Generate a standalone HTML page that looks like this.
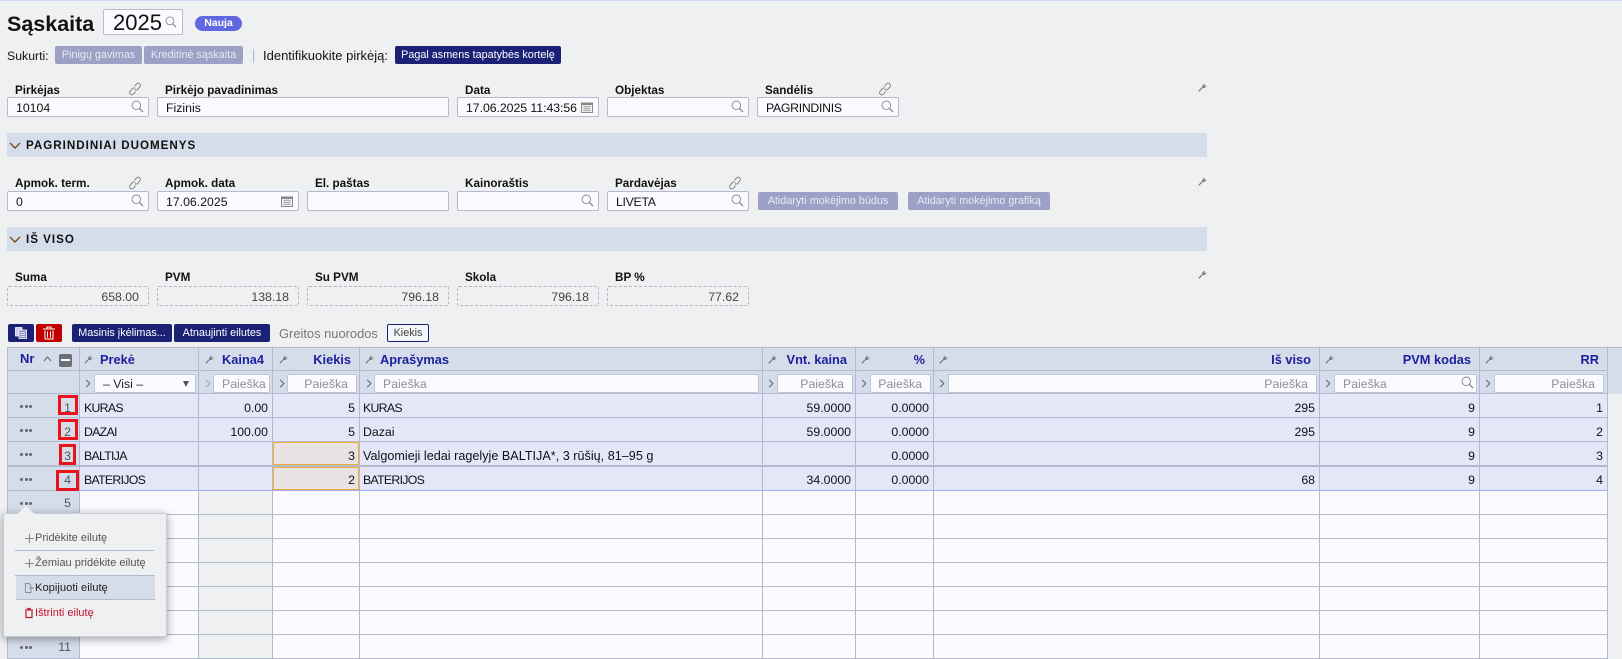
<!DOCTYPE html>
<html lang="lt"><head><meta charset="utf-8"><title>Sąskaita</title>
<style>
*{box-sizing:border-box}
html,body{margin:0;padding:0}
body{width:1622px;height:651px;overflow:hidden;position:relative;background:#eff0f2;font-family:"Liberation Sans",sans-serif;font-size:12.3px;color:#111}
.a{position:absolute}
.t{position:absolute;white-space:nowrap;line-height:14px}
.l{position:absolute;white-space:nowrap;font-weight:bold;font-size:11.7px;line-height:14px;color:#111}
.i{position:absolute;height:20px;background:#fbfbff;border:1px solid #b4bacd;border-radius:2px;line-height:20px;padding-left:8px;font-size:12.3px;white-space:nowrap}
.v{position:absolute;height:20px;border:1px dashed #b4b8c0;border-radius:2px;line-height:20px;text-align:right;padding-right:9px;font-size:12.3px;color:#444;width:142px;top:286px}
.b{position:absolute;height:18px;line-height:19px;text-align:center;font-size:10.8px;border-radius:2px;color:#fff;white-space:nowrap}
.g{background:#9da1c5;color:#e9eaf4}
.d{background:#1b2276}
.band{position:absolute;left:7px;width:1200px;height:24px;background:#d5dcea;font-weight:bold;font-size:11.6px;letter-spacing:1px;line-height:25px;padding-left:19px;color:#111}
svg{position:absolute;overflow:visible;fill:none}
table{position:absolute;left:7px;top:347px;width:1600px;border-collapse:separate;border-spacing:0;table-layout:fixed;border-left:1px solid #b4bacd;border-top:1px solid #b4bacd}
td{border-right:1px solid #b4bacd;border-bottom:1px solid #b4bacd;padding:0 4px 0 3px;white-space:nowrap;overflow:hidden;font-size:12.3px;background:#fbfbff}
td:nth-child(2){padding-left:4px}
td.r{text-align:right}
td.n{background:#d5dcea;text-align:right;color:#555;padding-right:8px;position:relative}
tr.h td{background:#d5dcea;font-weight:bold;font-size:12.8px;color:#1c1fa0;text-align:right;padding:0 8px 0 4px}
tr.f td{background:#d5dcea}
tr.x td{background:#e3e7f8;padding-top:4px}
tr.x td.n{background:#d5dcea}
tr.y td{background:#e3e7f8;padding-top:2px;border-top:1px solid #b4bacd;border-bottom-color:#a0a8e8}
tr.y td.n{background:#d5dcea;border-bottom-color:#b4bacd}
td.e{background:#eff0f2}
td.o{background:#e8e2e2!important;box-shadow:inset 0 0 0 1px #f0ad3a}
.u{letter-spacing:-.7px}
.dots{position:absolute;left:12px;top:11px;width:13px;height:4px;color:#666;font-size:0}
.dots i{display:inline-block;width:3px;height:3px;border-radius:50%;background:#666;margin-right:1.5px}
.fi{position:absolute;top:374px;height:19px;background:#fbfbff;border:1px solid #c0c5d4;border-radius:2px;color:#8d8f9a;font-size:12.3px;line-height:19px;padding:0 8px;white-space:nowrap;overflow:hidden}
.rb{position:absolute;border:3px solid #e8141c}
.pop{position:absolute;left:3px;top:513px;width:164px;height:124px;background:#eff0f2;border:1px solid #c8ccd4;border-radius:2px;box-shadow:0 2px 9px rgba(0,0,0,.38)}
.arrow{position:absolute;left:20px;top:508px;width:12px;height:12px;background:#eff0f2;transform:rotate(45deg)}
.pt{position:absolute;left:32px;font-size:11px;line-height:14px;color:#555;white-space:nowrap}
.pl{position:absolute;left:12px;width:139px;height:1px;background:#b4bacd}
</style></head><body>
<svg width="0" height="0" style="position:absolute">
<defs>
<symbol id="s" viewBox="0 0 14 14"><circle cx="5.7" cy="5.7" r="4.6" stroke="#888" stroke-width="1" fill="none"/><path d="M9 9l4 4" stroke="#888" stroke-width="1.4" fill="none"/></symbol>
<symbol id="k" viewBox="0 0 14 14"><path d="M6.5 4.2l2-2.2a2.2 2.2 0 0 1 3.4 2.8L9.6 7.4a2.2 2.2 0 0 1-3 .2M7.5 9.8l-2 2.2a2.2 2.2 0 0 1-3.4-2.8l2.3-2.6a2.2 2.2 0 0 1 3-.2" stroke="#777" stroke-width=".9" fill="none"/></symbol>
<symbol id="c" viewBox="0 0 12 12"><path d="M.5 2h11v9.5H.5z" stroke="#888" fill="#f4f4f6"/><path d="M.5 1.5h11V4H.5z" fill="#888"/><path d="M2 5.500h8M2 7.500h8M2 9.500h8M4 4.500v6M6 4.500v6M8 4.500v6" stroke="#aaa" stroke-width=".8"/></symbol>
<symbol id="w" viewBox="0 0 10 10"><path d="M.8 9.200L5 5" stroke="#777" stroke-width="1.300" fill="none"/><path d="M4.700 5.300C4.200 3.400 5.800 1 8.200 1L6.900 2.600l.7 1L9.300 2.500C9.500 4.500 7 6.200 4.700 5.300z" fill="#777"/></symbol>
<symbol id="h" viewBox="0 0 6 10"><path d="M1 1l4 4-4 4" stroke="#666" stroke-width="1.200" fill="none"/></symbol>
</defs></svg>

<div class="a" style="left:0;top:0;width:1622px;height:1px;background:#cfdcf5"></div>
<div class="t" style="left:7px;top:11px;font-size:21.5px;line-height:26px;font-weight:bold;color:#111">Sąskaita</div>
<div class="a" style="left:103px;top:9px;width:80px;height:26px;background:#fbfbff;border:1px solid #b9bdc8;border-radius:2px"></div>
<div class="t" style="left:113px;top:11px;font-size:22px;line-height:24px;color:#111">2025</div>
<svg style="left:165px;top:16px" width="12" height="12"><use href="#s" width="12" height="12"/></svg>
<div class="a" style="left:195px;top:16px;width:47px;height:15px;border-radius:8px;background:#6068e0;color:#fff;font-weight:bold;font-size:10.5px;line-height:15px;text-align:center">Nauja</div>

<div class="t" style="left:7px;top:49px;font-size:12.3px">Sukurti:</div>
<div class="b g" style="left:55px;top:46px;width:87px">Pinigų gavimas</div>
<div class="b g" style="left:144px;top:46px;width:99px">Kreditinė sąskaita</div>
<div class="a" style="left:253px;top:49px;width:1px;height:14px;background:#b4b8c0"></div>
<div class="t" style="left:263px;top:49px;font-size:13px">Identifikuokite pirkėją:</div>
<div class="b d" style="left:395px;top:46px;width:166px">Pagal asmens tapatybės kortelę</div>

<div class="l" style="left:15px;top:84px">Pirkėjas</div>
<div class="l" style="left:165px;top:84px">Pirkėjo pavadinimas</div>
<div class="l" style="left:465px;top:84px">Data</div>
<div class="l" style="left:615px;top:84px">Objektas</div>
<div class="l" style="left:765px;top:84px">Sandėlis</div>
<svg style="left:128px;top:82px" width="14" height="14"><use href="#k" width="14" height="14"/></svg>
<svg style="left:878px;top:82px" width="14" height="14"><use href="#k" width="14" height="14"/></svg>
<div class="i" style="left:7px;top:97px;width:142px">10104</div>
<svg style="left:131px;top:100px" width="13" height="13"><use href="#s" width="13" height="13"/></svg>
<div class="i" style="left:157px;top:97px;width:292px">Fizinis</div>
<div class="i" style="left:457px;top:97px;width:142px"><span style="letter-spacing:-.05px">17.06.2025 11:43:56</span></div>
<svg style="left:581px;top:101px" width="12" height="12"><use href="#c" width="12" height="12"/></svg>
<div class="i" style="left:607px;top:97px;width:142px"></div>
<svg style="left:731px;top:100px" width="13" height="13"><use href="#s" width="13" height="13"/></svg>
<div class="i" style="left:757px;top:97px;width:142px"><span style="letter-spacing:-.3px">PAGRINDINIS</span></div>
<svg style="left:881px;top:100px" width="13" height="13"><use href="#s" width="13" height="13"/></svg>
<svg style="left:1198px;top:83px" width="9" height="9"><use href="#w" width="9" height="9"/></svg>

<div class="band" style="top:133px">PAGRINDINIAI DUOMENYS</div>
<svg style="left:9px;top:142px" width="12" height="7"><path d="M1 1l5 5 5-5" stroke="#7a4a20" stroke-width="1.400"/></svg>

<div class="l" style="left:15px;top:177px">Apmok. term.</div>
<div class="l" style="left:165px;top:177px">Apmok. data</div>
<div class="l" style="left:315px;top:177px">El. paštas</div>
<div class="l" style="left:465px;top:177px">Kainoraštis</div>
<div class="l" style="left:615px;top:177px">Pardavėjas</div>
<svg style="left:128px;top:176px" width="14" height="14"><use href="#k" width="14" height="14"/></svg>
<svg style="left:728px;top:176px" width="14" height="14"><use href="#k" width="14" height="14"/></svg>
<div class="i" style="left:7px;top:191px;width:142px">0</div>
<svg style="left:131px;top:194px" width="13" height="13"><use href="#s" width="13" height="13"/></svg>
<div class="i" style="left:157px;top:191px;width:142px">17.06.2025</div>
<svg style="left:281px;top:195px" width="12" height="12"><use href="#c" width="12" height="12"/></svg>
<div class="i" style="left:307px;top:191px;width:142px"></div>
<div class="i" style="left:457px;top:191px;width:142px"></div>
<svg style="left:581px;top:194px" width="13" height="13"><use href="#s" width="13" height="13"/></svg>
<div class="i" style="left:607px;top:191px;width:142px"><span style="letter-spacing:-.3px">LIVETA</span></div>
<svg style="left:731px;top:194px" width="13" height="13"><use href="#s" width="13" height="13"/></svg>
<div class="b g" style="left:758px;top:192px;width:140px">Atidaryti mokėjimo būdus</div>
<div class="b g" style="left:908px;top:192px;width:142px">Atidaryti mokėjimo grafiką</div>
<svg style="left:1198px;top:177px" width="9" height="9"><use href="#w" width="9" height="9"/></svg>

<div class="band" style="top:227px">IŠ VISO</div>
<svg style="left:9px;top:236px" width="12" height="7"><path d="M1 1l5 5 5-5" stroke="#7a4a20" stroke-width="1.400"/></svg>

<div class="l" style="left:15px;top:271px">Suma</div>
<div class="l" style="left:165px;top:271px">PVM</div>
<div class="l" style="left:315px;top:271px">Su PVM</div>
<div class="l" style="left:465px;top:271px">Skola</div>
<div class="l" style="left:615px;top:271px">BP %</div>
<div class="v" style="left:7px">658.00</div>
<div class="v" style="left:157px">138.18</div>
<div class="v" style="left:307px">796.18</div>
<div class="v" style="left:457px">796.18</div>
<div class="v" style="left:607px">77.62</div>
<svg style="left:1198px;top:270px" width="9" height="9"><use href="#w" width="9" height="9"/></svg>

<div class="b d" style="left:8px;top:324px;width:26px"></div>
<svg style="left:15px;top:327px" width="12" height="12"><path d="M.5.500h6.500v8.500h-6.500z" fill="#c9cde8" stroke="#fff" stroke-width=".8"/><path d="M4 3h7.500v8.500H4z" fill="#8a90c8" stroke="#fff" stroke-width=".8"/><path d="M5.500 5.500h4.500M5.500 7.500h4.500M5.500 9.500h4.500" stroke="#fff" stroke-width=".8"/></svg>
<div class="b" style="left:36px;top:324px;width:26px;background:#c00000"></div>
<svg style="left:43px;top:326px" width="12" height="14"><path d="M0 3h12M4 3V1h4v2M2 4.500v8.500h8V4.500M4.500 5.500v6M7.500 5.500v6" stroke="#fff" stroke-width="1"/></svg>
<div class="b d" style="left:72px;top:324px;width:100px">Masinis įkėlimas...</div>
<div class="b d" style="left:174px;top:324px;width:96px">Atnaujinti eilutes</div>
<div class="t" style="left:279px;top:327px;font-size:12.9px;color:#777">Greitos nuorodos</div>
<div class="a" style="left:387px;top:324px;width:42px;height:18px;border:1px solid #1b2276;border-radius:2px;text-align:center;font-size:10.8px;line-height:17px;color:#444;background:#f4f5f8">Kiekis</div>

<div class="a" style="left:1606px;top:347px;width:16px;height:47px;background:#d5dcea;border-top:1px solid #b4bacd"></div>
<table>
<colgroup><col style="width:72px"><col style="width:119px"><col style="width:74px"><col style="width:87px"><col style="width:403px"><col style="width:93px"><col style="width:78px"><col style="width:386px"><col style="width:160px"><col style="width:128px"></colgroup>
<tr class="h" style="height:23px"><td></td><td style="text-align:left;padding-left:20px">Prekė</td><td>Kaina4</td><td>Kiekis</td><td style="text-align:left;padding-left:20px">Aprašymas</td><td>Vnt. kaina</td><td>%</td><td>Iš viso</td><td>PVM kodas</td><td>RR</td></tr>
<tr class="f" style="height:23px"><td></td><td></td><td></td><td></td><td></td><td></td><td></td><td></td><td></td><td></td></tr>
<tr class="x" style="height:24px"><td class="n"><span class="dots"><i></i><i></i><i></i></span>1</td><td><span class="u">KURAS</span></td><td class="r">0.00</td><td class="r">5</td><td><span class="u">KURAS</span></td><td class="r">59.0000</td><td class="r">0.0000</td><td class="r">295</td><td class="r">9</td><td class="r">1</td></tr>
<tr class="x" style="height:24px"><td class="n"><span class="dots"><i></i><i></i><i></i></span>2</td><td><span class="u">DAZAI</span></td><td class="r">100.00</td><td class="r">5</td><td>Dazai</td><td class="r">59.0000</td><td class="r">0.0000</td><td class="r">295</td><td class="r">9</td><td class="r">2</td></tr>
<tr class="x" style="height:24px"><td class="n"><span class="dots"><i></i><i></i><i></i></span>3</td><td><span class="u">BALTIJA</span></td><td></td><td class="r o">3</td><td><span style="font-size:12.6px;letter-spacing:.02px">Valgomieji ledai ragelyje BALTIJA*, 3 rūšių, 81–95 g</span></td><td></td><td class="r">0.0000</td><td></td><td class="r">9</td><td class="r">3</td></tr>
<tr class="y" style="height:25px"><td class="n"><span class="dots"><i></i><i></i><i></i></span>4</td><td><span class="u">BATERIJOS</span></td><td></td><td class="r o">2</td><td><span class="u">BATERIJOS</span></td><td class="r">34.0000</td><td class="r">0.0000</td><td class="r">68</td><td class="r">9</td><td class="r">4</td></tr>
<tr style="height:24px"><td class="n"><span class="dots"><i></i><i></i><i></i></span>5</td><td></td><td class="e"></td><td></td><td></td><td></td><td></td><td></td><td></td><td></td></tr>
<tr style="height:24px"><td class="n"><span class="dots"><i></i><i></i><i></i></span>6</td><td></td><td class="e"></td><td></td><td></td><td></td><td></td><td></td><td></td><td></td></tr>
<tr style="height:24px"><td class="n"><span class="dots"><i></i><i></i><i></i></span>7</td><td></td><td class="e"></td><td></td><td></td><td></td><td></td><td></td><td></td><td></td></tr>
<tr style="height:24px"><td class="n"><span class="dots"><i></i><i></i><i></i></span>8</td><td></td><td class="e"></td><td></td><td></td><td></td><td></td><td></td><td></td><td></td></tr>
<tr style="height:24px"><td class="n"><span class="dots"><i></i><i></i><i></i></span>9</td><td></td><td class="e"></td><td></td><td></td><td></td><td></td><td></td><td></td><td></td></tr>
<tr style="height:24px"><td class="n"><span class="dots"><i></i><i></i><i></i></span>10</td><td></td><td class="e"></td><td></td><td></td><td></td><td></td><td></td><td></td><td></td></tr>
<tr style="height:24px"><td class="n"><span class="dots"><i></i><i></i><i></i></span>11</td><td></td><td class="e"></td><td></td><td></td><td></td><td></td><td></td><td></td><td></td></tr>
</table>

<div class="t" style="left:20px;top:352px;font-weight:bold;font-size:13px;color:#1c1fa0">Nr</div>
<svg style="left:43px;top:356px" width="9" height="6"><path d="M1 5l3.500-4L8 5" stroke="#666" stroke-width="1"/></svg>
<div class="a" style="left:59px;top:354px;width:13px;height:13px;background:#6d7076;border-radius:2px"></div>
<div class="a" style="left:61px;top:359px;width:9px;height:2px;background:#fff"></div>

<svg style="left:84px;top:355px" width="9" height="9"><use href="#w" width="9" height="9"/></svg>
<svg style="left:205px;top:355px" width="9" height="9"><use href="#w" width="9" height="9"/></svg>
<svg style="left:279px;top:355px" width="9" height="9"><use href="#w" width="9" height="9"/></svg>
<svg style="left:365px;top:355px" width="9" height="9"><use href="#w" width="9" height="9"/></svg>
<svg style="left:768px;top:355px" width="9" height="9"><use href="#w" width="9" height="9"/></svg>
<svg style="left:861px;top:355px" width="9" height="9"><use href="#w" width="9" height="9"/></svg>
<svg style="left:939px;top:355px" width="9" height="9"><use href="#w" width="9" height="9"/></svg>
<svg style="left:1325px;top:355px" width="9" height="9"><use href="#w" width="9" height="9"/></svg>
<svg style="left:1485px;top:355px" width="9" height="9"><use href="#w" width="9" height="9"/></svg>

<svg style="left:85px;top:379px" width="6" height="9"><use href="#h" width="6" height="9"/></svg>
<svg style="left:205px;top:379px;opacity:.45" width="6" height="9"><use href="#h" width="6" height="9"/></svg>
<svg style="left:279px;top:379px" width="6" height="9"><use href="#h" width="6" height="9"/></svg>
<svg style="left:366px;top:379px" width="6" height="9"><use href="#h" width="6" height="9"/></svg>
<svg style="left:768px;top:379px" width="6" height="9"><use href="#h" width="6" height="9"/></svg>
<svg style="left:861px;top:379px" width="6" height="9"><use href="#h" width="6" height="9"/></svg>
<svg style="left:939px;top:379px" width="6" height="9"><use href="#h" width="6" height="9"/></svg>
<svg style="left:1325px;top:379px" width="6" height="9"><use href="#h" width="6" height="9"/></svg>
<svg style="left:1485px;top:379px" width="6" height="9"><use href="#h" width="6" height="9"/></svg>

<div class="fi" style="left:94px;width:102px;color:#222">– Visi –</div>
<div class="a" style="left:183px;top:381px;width:0;height:0;border-left:3.500px solid transparent;border-right:3.500px solid transparent;border-top:6px solid #555"></div>
<div class="fi" style="left:213px;width:57px">Paieška</div>
<div class="fi" style="left:287px;width:70px;text-align:right">Paieška</div>
<div class="fi" style="left:374px;width:385px">Paieška</div>
<div class="fi" style="left:777px;width:76px;text-align:right">Paieška</div>
<div class="fi" style="left:870px;width:61px;text-align:right;padding:0 8px 0 0">Paieška</div>
<div class="fi" style="left:948px;width:369px;text-align:right">Paieška</div>
<div class="fi" style="left:1334px;width:143px">Paieška</div>
<svg style="left:1461px;top:376px" width="13" height="13"><use href="#s" width="13" height="13"/></svg>
<div class="fi" style="left:1494px;width:110px;text-align:right">Paieška</div>

<div class="rb" style="left:58px;top:395px;width:20px;height:20px"></div>
<div class="rb" style="left:58px;top:419px;width:20px;height:21px"></div>
<div class="rb" style="left:59px;top:444px;width:17px;height:21px"></div>
<div class="rb" style="left:56px;top:470px;width:23px;height:21px"></div>

<div class="pop"></div>
<div class="arrow"></div>
<div class="a" style="left:3px;top:513px;width:164px;height:124px">
<svg style="left:22px;top:21px" width="9" height="9"><path d="M4.500 0v9M0 4.500h9" stroke="#888" stroke-width="1.100"/></svg>
<div class="pt" style="top:18px">Pridėkite eilutę</div>
<div class="pl" style="top:37px"></div>
<svg style="left:22px;top:46px" width="9" height="9"><path d="M4.500 0v9M0 4.500h9" stroke="#888" stroke-width="1.100"/></svg>
<div class="pt" style="top:43px">Žemiau pridėkite eilutę</div>
<div class="pl" style="top:62px"></div>
<div class="a" style="left:13px;top:62px;width:139px;height:25px;background:#d5dcea;border-top:1px solid #b4bacd;border-bottom:1px solid #b4bacd"></div>
<svg style="left:22px;top:70px" width="9" height="10"><path d="M.5.500h3.500l2 2v7H.5zM4 5h5" stroke="#888" stroke-width=".9"/></svg>
<div class="pt" style="top:68px;color:#222;font-size:11.2px">Kopijuoti eilutę</div>
<svg style="left:22px;top:95px" width="8" height="10"><path d="M0 2h8M3 2V.5h2V2M1 3v6.500h6V3" stroke="#c0142c" stroke-width="1.200"/></svg>
<div class="pt" style="top:93px;color:#c0142c">Ištrinti eilutę</div>
</div>
</body></html>
